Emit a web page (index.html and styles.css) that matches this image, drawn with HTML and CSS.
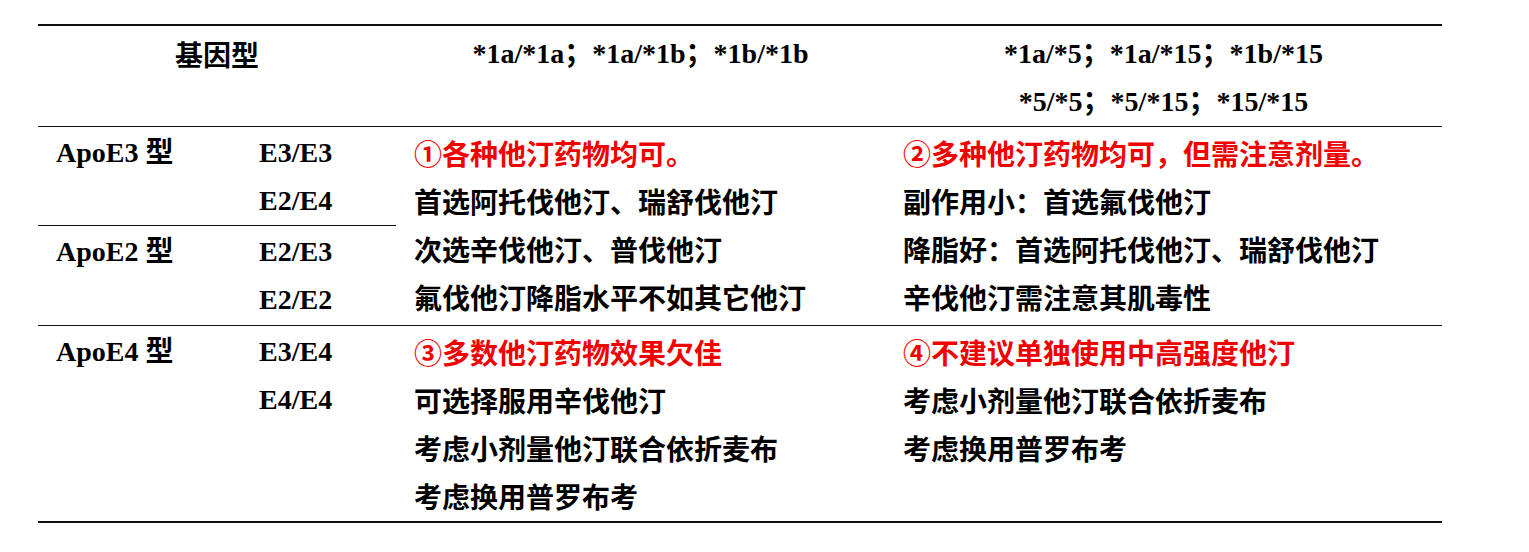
FILE: index.html
```html
<!DOCTYPE html>
<html lang="zh-CN">
<head>
<meta charset="utf-8">
<title>ApoE 基因型与他汀选择</title>
<link rel="stylesheet" href="styles.css">
</head>
<body>
<div class="table">
  <div class="cell head head-gene cjk">基因型</div>
  <div class="cell head latin">
    <div class="line">*1a/*1a；*1a/*1b；*1b/*1b</div>
  </div>
  <div class="cell head latin">
    <div class="line">*1a/*5；*1a/*15；*1b/*15</div>
    <div class="line">*5/*5；*5/*15；*15/*15</div>
  </div>

  <div class="cell c1 r2 latin"><div class="line">ApoE3 型</div></div>
  <div class="cell c2 r2 latin">
    <div class="line">E3/E3</div>
    <div class="line">E2/E4</div>
  </div>
  <div class="cell c3 g1 cjk">
    <div class="line red">①各种他汀药物均可。</div>
    <div class="line">首选阿托伐他汀、瑞舒伐他汀</div>
    <div class="line">次选辛伐他汀、普伐他汀</div>
    <div class="line">氟伐他汀降脂水平不如其它他汀</div>
  </div>
  <div class="cell c4 g1 cjk">
    <div class="line red">②多种他汀药物均可，但需注意剂量。</div>
    <div class="line">副作用小：首选氟伐他汀</div>
    <div class="line">降脂好：首选阿托伐他汀、瑞舒伐他汀</div>
    <div class="line">辛伐他汀需注意其肌毒性</div>
  </div>

  <div class="cell c1 r3 latin"><div class="line">ApoE2 型</div></div>
  <div class="cell c2 r3 latin">
    <div class="line">E2/E3</div>
    <div class="line">E2/E2</div>
  </div>

  <div class="cell c1 r4 latin"><div class="line">ApoE4 型</div></div>
  <div class="cell c2 r4 latin">
    <div class="line">E3/E4</div>
    <div class="line">E4/E4</div>
  </div>
  <div class="cell c3 r4 cjk">
    <div class="line red">③多数他汀药物效果欠佳</div>
    <div class="line">可选择服用辛伐他汀</div>
    <div class="line">考虑小剂量他汀联合依折麦布</div>
    <div class="line">考虑换用普罗布考</div>
  </div>
  <div class="cell c4 r4 cjk">
    <div class="line red">④不建议单独使用中高强度他汀</div>
    <div class="line">考虑小剂量他汀联合依折麦布</div>
    <div class="line">考虑换用普罗布考</div>
  </div>
</div>
</body>
</html>
```

FILE: styles.css
```css
html, body {
  margin: 0;
  padding: 0;
  background: #ffffff;
}

body {
  padding: 24px 0 0 38px;
  color: #000000;
}

.table {
  display: grid;
  width: 1404px;
  grid-template-columns: 203px 155px 489px 557px;
  grid-template-rows: 101px 99px 100px 195px;
  border-top: 2px solid #111;
  border-bottom: 2px solid #111;
}

.cell {
  padding: 2px 0 0 18px;
  font-size: 28px;
  font-weight: 700;
  line-height: 48px;
  white-space: nowrap;
}

.line {
  height: 48px;
}

.latin {
  font-family: "Liberation Serif", "Noto Sans CJK SC", serif;
}

.cjk {
  font-family: "Noto Sans CJK SC", "Noto Sans", sans-serif;
}

.head {
  padding: 4px 0 0 0;
  text-align: center;
  border-bottom: 1px solid #111;
}

.head-gene {
  grid-column: 1 / 3;
}

.c1 { grid-column: 1; }
.c2 { grid-column: 2; }
.c3 { grid-column: 3; }
.c4 { grid-column: 4; }

.r2 { grid-row: 2; border-bottom: 1px solid #111; }
.r3 { grid-row: 3; border-bottom: 1px solid #111; }
.g1 { grid-row: 2 / 4; border-bottom: 1px solid #111; }
.r4 { grid-row: 4; }

.red {
  color: #f20000;
}
```
